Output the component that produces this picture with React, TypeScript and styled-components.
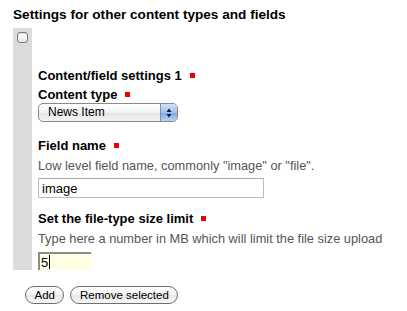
import React from "react";
import styled, { createGlobalStyle } from "styled-components";

const GlobalStyle = createGlobalStyle`
  html, body {
    margin: 0;
    padding: 0;
    background: #ffffff;
  }
  body {
    font-family: "Liberation Sans", Arial, sans-serif;
    color: #000;
  }
`;

const Page = styled.div`
  width: 407px;
  height: 311px;
  padding: 6px 0 0 13px;
  box-sizing: border-box;
`;

const Title = styled.h2`
  margin: 0;
  font-size: 13.6px;
  font-weight: bold;
  line-height: 18px;
`;

const Group = styled.div`
  display: flex;
  margin-top: 4px;
  gap: 6px;
`;

const SideBar = styled.div`
  width: 19px;
  background: #dcdcdc;
  display: flex;
  justify-content: center;
  padding-top: 4px;
`;

const Check = styled.span`
  display: block;
  width: 11px;
  height: 11px;
  box-sizing: border-box;
  border: 1px solid #7a7a7a;
  border-radius: 3px;
  background: linear-gradient(#ffffff, #e8e8e8);
  box-shadow: inset 0 1px 1px rgba(0, 0, 0, 0.15);
`;

const Fields = styled.div`
  display: flex;
  flex-direction: column;
  padding-top: 39px;
`;

const Label = styled.div<{ $gap?: number }>`
  font-size: 13px;
  font-weight: bold;
  line-height: 18px;
  margin-top: ${(p) => p.$gap ?? 0}px;
  display: flex;
  align-items: center;
`;

const Required = styled.span`
  display: inline-block;
  width: 5px;
  height: 5px;
  background: #ee0000;
  margin-left: 8px;
  margin-top: -2px;
`;

const Help = styled.div`
  font-size: 12.8px;
  line-height: 18px;
  color: #555555;
  margin-top: 2px;
`;

const SelectBox = styled.div`
  margin-top: -1px;
  width: 140px;
  height: 19px;
  box-sizing: border-box;
  border: 1px solid #8a8a8a;
  border-radius: 5px;
  background: linear-gradient(#ffffff 0%, #f2f2f2 50%, #e4e4e4 51%, #f4f4f4 100%);
  display: flex;
  overflow: hidden;
  font-size: 12px;
`;

const SelectText = styled.span`
  flex: 1;
  padding-left: 9px;
  line-height: 17px;
`;

const SelectCap = styled.span`
  width: 16px;
  border-left: 1px solid #7c8fb5;
  background: linear-gradient(#cfe0f7 0%, #9ec0ee 50%, #7aa7e6 51%, #b9d3f6 100%);
  display: flex;
  align-items: center;
  justify-content: center;
`;

const TextBox = styled.div<{ $width: number; $tint?: boolean }>`
  margin-top: ${(p) => (p.$tint ? 4 : 3)}px;
  width: ${(p) => p.$width}px;
  height: ${(p) => (p.$tint ? 18 : 20)}px;
  box-sizing: border-box;
  border: 1px solid #bdbdbd;
  border-top-color: ${(p) => (p.$tint ? "#8c8c8c" : "#a8a8a8")};
  border-left-color: ${(p) => (p.$tint ? "#8c8c8c" : "#bdbdbd")};
  border-width: ${(p) => (p.$tint ? "2px 0 0 2px" : "1px")};
  background: ${(p) => (p.$tint ? "#fffee2" : "#ffffff")};
  font-size: 13px;
  line-height: 17px;
  padding-left: ${(p) => (p.$tint ? 1 : 3)}px;
  display: flex;
  align-items: center;
`;

const Caret = styled.span`
  display: inline-block;
  width: 1px;
  height: 14px;
  background: #000;
  margin-left: 1px;
`;

const Actions = styled.div`
  display: flex;
  gap: 6px;
  margin: 16px 0 0 12px;
`;

const Button = styled.button`
  height: 18px;
  padding: 0 8.5px;
  border: 1px solid #6e6e6e;
  border-radius: 9px;
  background: linear-gradient(#ffffff 0%, #f3f3f3 50%, #e6e6e6 51%, #f7f7f7 100%);
  font-family: "Liberation Sans", Arial, sans-serif;
  font-size: 11.5px;
  line-height: 16px;
  color: #000;
`;

export default function App() {
  return (
    <Page>
      <GlobalStyle />
      <Title>Settings for other content types and fields</Title>
      <Group>
        <SideBar>
          <Check />
        </SideBar>
        <Fields>
          <Label>
            Content/field settings 1<Required />
          </Label>
          <Label $gap={1}>
            Content type<Required />
          </Label>
          <SelectBox>
            <SelectText>News Item</SelectText>
            <SelectCap>
              <svg width="6" height="10" viewBox="0 0 6 10">
                <path d="M3 0.5 L5.5 4 L0.5 4 Z" fill="#1a1a1a" />
                <path d="M3 9.5 L5.5 6 L0.5 6 Z" fill="#1a1a1a" />
              </svg>
            </SelectCap>
          </SelectBox>
          <Label $gap={15}>
            Field name<Required />
          </Label>
          <Help>Low level field name, commonly "image" or "file".</Help>
          <TextBox $width={226}>image</TextBox>
          <Label $gap={12}>
            Set the file-type size limit<Required />
          </Label>
          <Help>Type here a number in MB which will limit the file size upload</Help>
          <TextBox $width={53} $tint>
            5<Caret />
          </TextBox>
        </Fields>
      </Group>
      <Actions>
        <Button>Add</Button>
        <Button>Remove selected</Button>
      </Actions>
    </Page>
  );
}
